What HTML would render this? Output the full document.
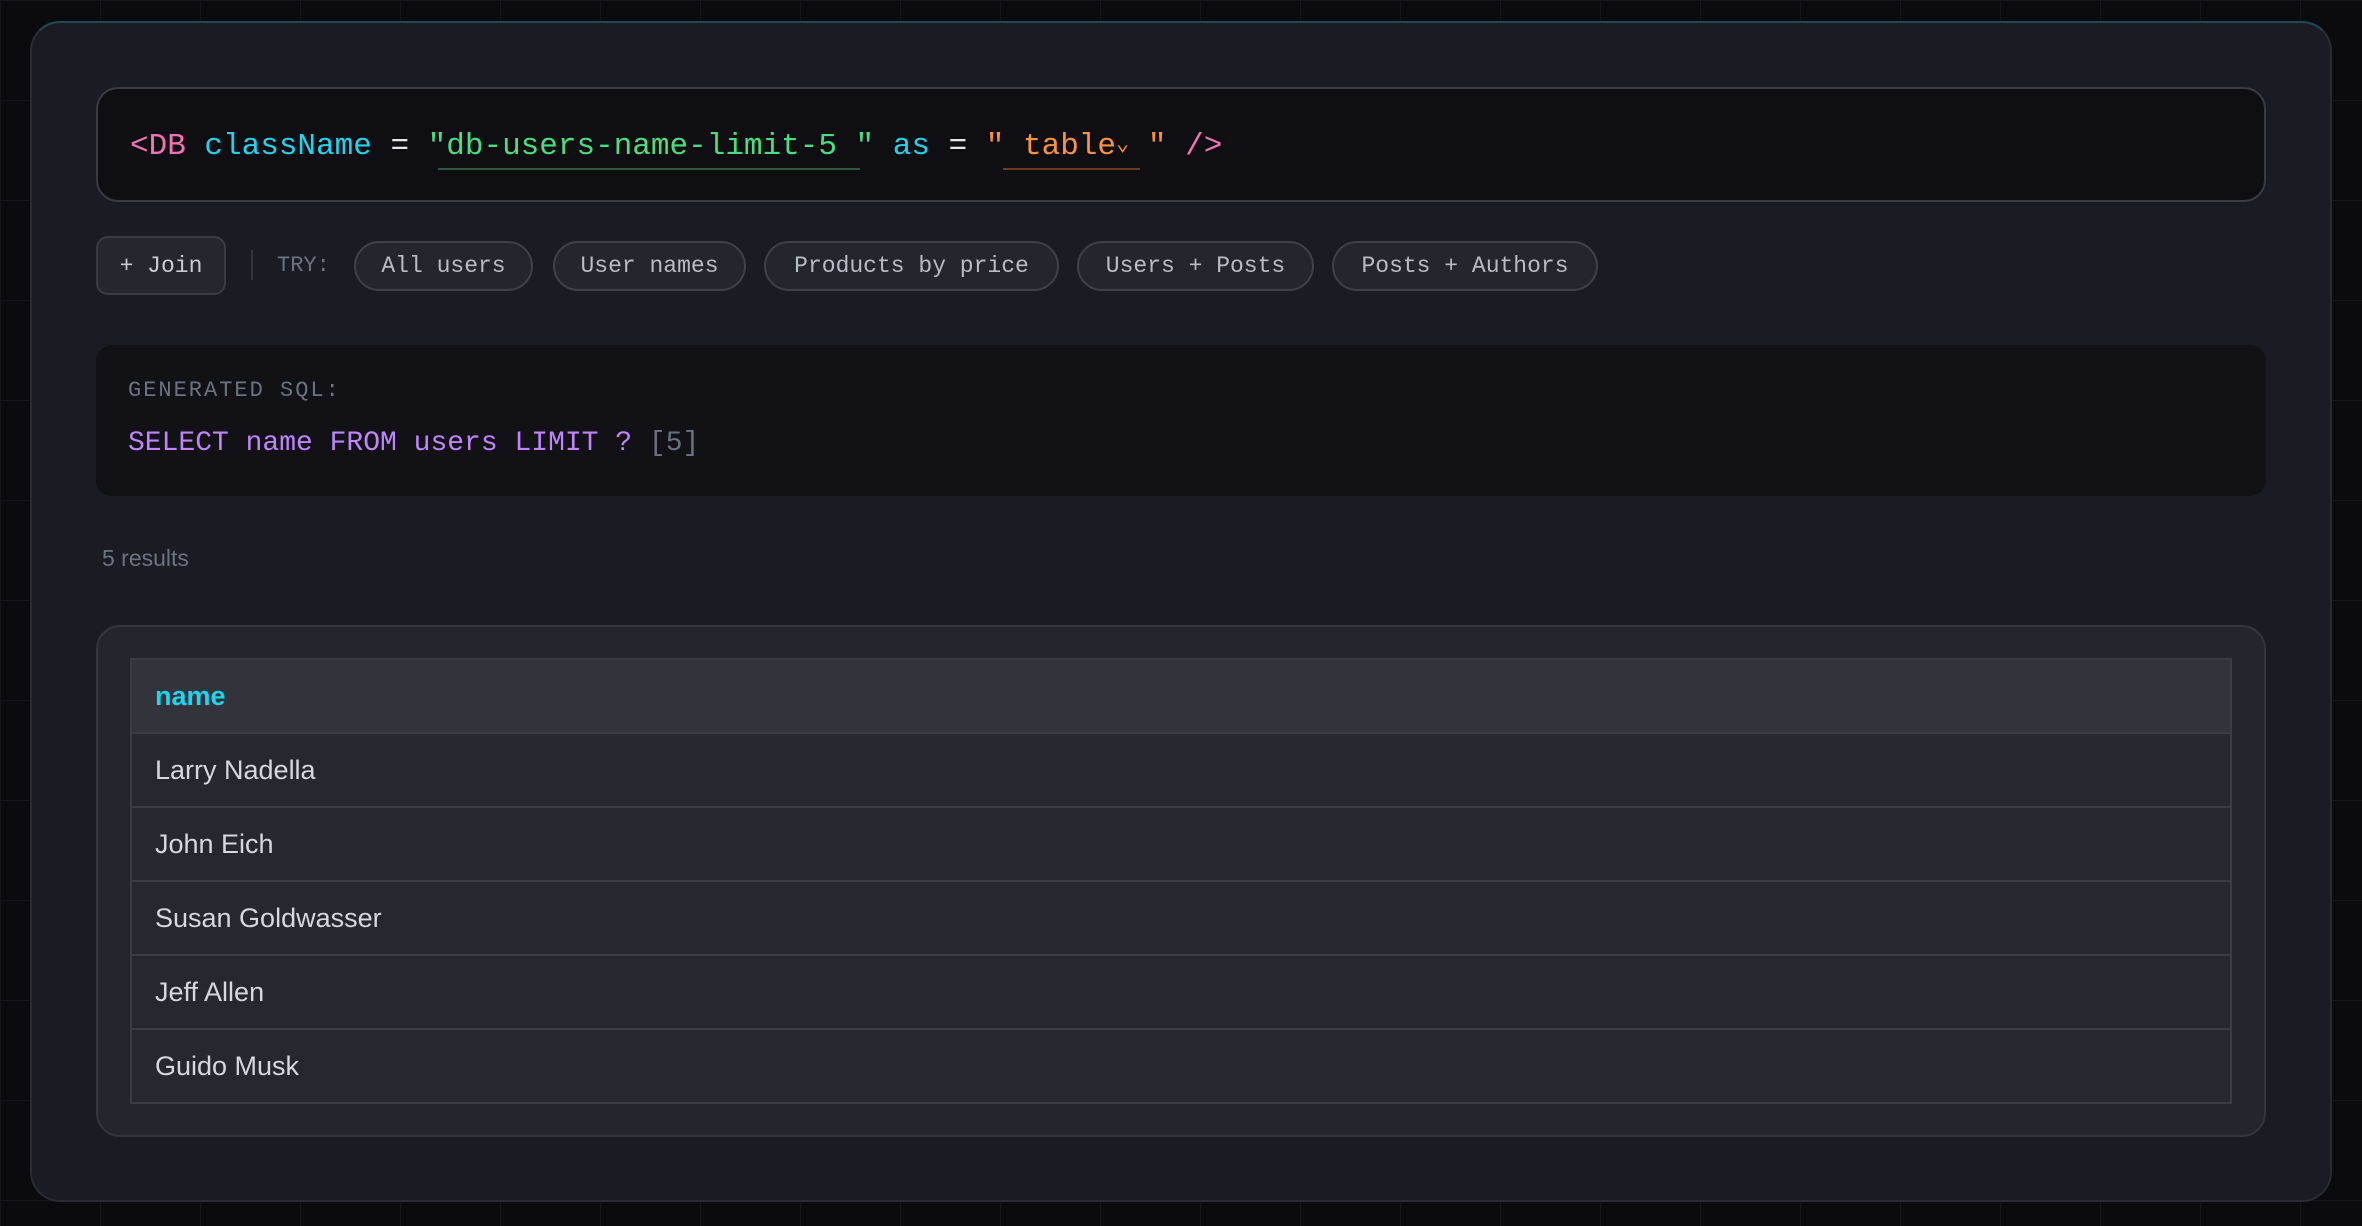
<!DOCTYPE html>
<html><head><meta charset="utf-8"><style>
*{margin:0;padding:0;box-sizing:border-box}
body{width:2362px;height:1226px;overflow:hidden;background:#0b0b0f;
background-image:linear-gradient(#15161b 1px,transparent 1px),linear-gradient(90deg,#15161b 1px,transparent 1px);background-size:100px 100px;position:relative;font-family:"Liberation Sans",sans-serif}
.mono{font-family:"Liberation Mono",monospace}
.card{position:absolute;left:30px;top:21px;width:2302px;height:1181px;background:#1b1c23;border:2px solid #2a2b33;border-top-color:#1e4a55;border-radius:30px}
.input{position:absolute;left:96px;top:87px;width:2170px;height:115px;background:#0f0f13;border:2px solid #3a3b43;border-radius:22px}
.code{position:absolute;left:130px;top:127px;font-size:31px;white-space:pre;line-height:40px}
.pk{color:#f472b6}.cy{color:#22d3ee}.wh{color:#e5e7eb}.gr{color:#4ade80}.or{color:#fb923c}.gy{color:#6b7280}
.btn{position:absolute;top:236px;height:59px;left:96px;width:130px;border:2px solid #3a3b43;background:#25262e;border-radius:12px;color:#c9ccd3;font-size:23px;display:flex;align-items:center;justify-content:center}
.pill{position:absolute;top:241px;height:50px;border:2px solid #3f4049;background:#25262d;border-radius:25px;color:#b8bcc6;font-size:23px;display:flex;align-items:center;justify-content:center}
.sql{position:absolute;left:96px;top:345px;width:2170px;height:151px;background:#111116;border-radius:16px}
.tcard{position:absolute;left:96px;top:625px;width:2170px;height:512px;background:#24252d;border:2px solid #34353d;border-radius:24px}
.tbl{position:absolute;left:130px;top:658px;width:2102px;border:2px solid #3b3c44}
.row{height:74px;border-bottom:2px solid #3b3c44;background:#26272f;display:flex;align-items:center;padding-left:23px;font-size:27px;color:#d6d8de}
.row:last-child{border-bottom:none;height:72px}
.hd{background:#32333b;color:#22d3ee;font-weight:bold}
</style></head><body>
<div class="card"></div>
<div class="input"></div>
<div class="code mono"><span class="pk">&lt;DB</span> <span class="cy">className</span><span class="wh"> = </span><span class="gr">"db-users-name-limit-5 "</span> <span class="cy">as</span><span class="wh"> = </span><span class="or">" table</span><span class="or" style="font-size:22px;position:relative;top:-4px">⌄</span><span class="or"> "</span> <span class="pk">/&gt;</span></div>
<div style="position:absolute;left:438px;top:168px;width:422px;height:2px;background:#2d5a3a"></div>
<div style="position:absolute;left:1003px;top:168px;width:137px;height:2px;background:#6b3a20"></div>
<div class="btn mono">+ Join</div>
<div style="position:absolute;left:251px;top:250px;width:2px;height:30px;background:#33343c"></div>
<div class="mono" style="position:absolute;left:277px;top:253px;font-size:22px;color:#6b7280">TRY:</div>
<div class="pill mono" style="left:354px;width:179px">All users</div>
<div class="pill mono" style="left:553px;width:193px">User names</div>
<div class="pill mono" style="left:764px;width:295px">Products by price</div>
<div class="pill mono" style="left:1077px;width:237px">Users + Posts</div>
<div class="pill mono" style="left:1332px;width:266px">Posts + Authors</div>
<div class="sql"></div>
<div class="mono" style="position:absolute;left:128px;top:378px;font-size:22px;letter-spacing:2px;color:#6b7280">GENERATED SQL:</div>
<div class="mono" style="position:absolute;left:128px;top:428px;font-size:28px;color:#c084fc;white-space:pre">SELECT name FROM users LIMIT ? <span class="gy">[5]</span></div>
<div style="position:absolute;left:102px;top:545px;font-size:23px;color:#6b7280">5 results</div>
<div class="tcard"></div>
<div class="tbl">
<div class="row hd">name</div>
<div class="row">Larry Nadella</div>
<div class="row">John Eich</div>
<div class="row">Susan Goldwasser</div>
<div class="row">Jeff Allen</div>
<div class="row">Guido Musk</div>
</div>
</body></html>
